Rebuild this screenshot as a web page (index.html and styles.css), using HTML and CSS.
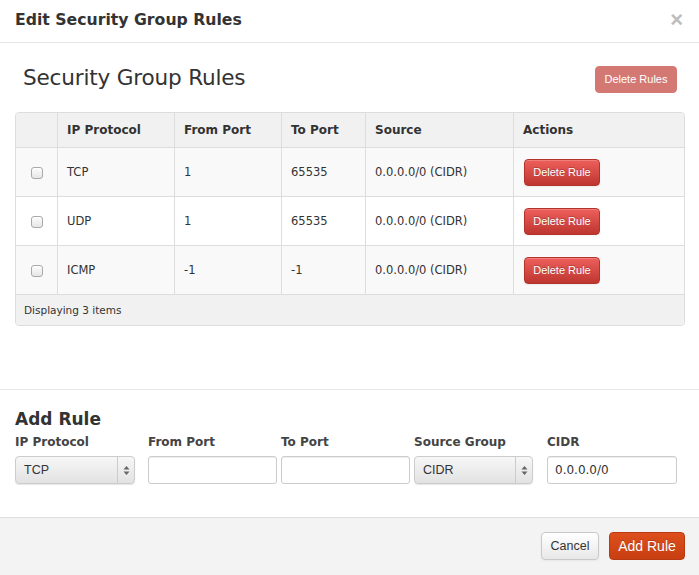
FILE: index.html
```html
<!DOCTYPE html>
<html>
<head>
<meta charset="utf-8">
<link rel="stylesheet" href="styles.css">
</head>
<body>
<div class="modal">
  <div class="modal-header">
    <h3 class="modal-title">Edit Security Group Rules</h3>
    <span class="close">×</span>
  </div>
  <div class="modal-body">
    <div class="table-head">
      <h2 class="table-title">Security Group Rules</h2>
      <button class="btn btn-danger btn-small disabled">Delete Rules</button>
    </div>
    <table class="rules">
      <thead>
        <tr>
          <th class="c-check"></th>
          <th class="c-proto">IP Protocol</th>
          <th class="c-from">From Port</th>
          <th class="c-to">To Port</th>
          <th class="c-src">Source</th>
          <th class="c-act">Actions</th>
        </tr>
      </thead>
      <tbody>
        <tr class="odd">
          <td class="c-check"><span class="checkbox"></span></td>
          <td>TCP</td><td>1</td><td>65535</td><td>0.0.0.0/0 (CIDR)</td>
          <td><button class="btn btn-danger btn-small">Delete Rule</button></td>
        </tr>
        <tr>
          <td class="c-check"><span class="checkbox"></span></td>
          <td>UDP</td><td>1</td><td>65535</td><td>0.0.0.0/0 (CIDR)</td>
          <td><button class="btn btn-danger btn-small">Delete Rule</button></td>
        </tr>
        <tr class="odd">
          <td class="c-check"><span class="checkbox"></span></td>
          <td>ICMP</td><td>-1</td><td>-1</td><td>0.0.0.0/0 (CIDR)</td>
          <td><button class="btn btn-danger btn-small">Delete Rule</button></td>
        </tr>
      </tbody>
      <tfoot>
        <tr><td colspan="6">Displaying 3 items</td></tr>
      </tfoot>
    </table>
  </div>
  <div class="add-rule">
    <h3 class="add-title">Add Rule</h3>
    <div class="fields">
      <div class="field f-proto">
        <label>IP Protocol</label>
        <div class="select"><span class="sel-text">TCP</span><span class="sel-arrows"><svg width="7" height="11" viewBox="0 0 7 11"><path d="M3.5 1 L6.5 4.5 H0.5 Z" fill="#666"/><path d="M3.5 10 L6.5 6.5 H0.5 Z" fill="#666"/></svg></span></div>
      </div>
      <div class="field f-from">
        <label>From Port</label>
        <div class="input"></div>
      </div>
      <div class="field f-to">
        <label>To Port</label>
        <div class="input"></div>
      </div>
      <div class="field f-src">
        <label>Source Group</label>
        <div class="select"><span class="sel-text">CIDR</span><span class="sel-arrows"><svg width="7" height="11" viewBox="0 0 7 11"><path d="M3.5 1 L6.5 4.5 H0.5 Z" fill="#666"/><path d="M3.5 10 L6.5 6.5 H0.5 Z" fill="#666"/></svg></span></div>
      </div>
      <div class="field f-cidr">
        <label>CIDR</label>
        <div class="input">0.0.0.0/0</div>
      </div>
    </div>
  </div>
  <div class="modal-footer">
    <button class="btn btn-default">Cancel</button>
    <button class="btn btn-primary">Add Rule</button>
  </div>
</div>
</body>
</html>
```
FILE: styles.css
```css
* { box-sizing: border-box; }
html, body { margin: 0; padding: 0; background: #fff; }
body { font-family: "DejaVu Sans", Verdana, sans-serif; color: #333; width: 699px; height: 575px; overflow: hidden; }

.modal { width: 699px; height: 575px; display: flex; flex-direction: column; }

.modal-header {
  height: 43px;
  border-bottom: 1px solid #e6e6e6;
  display: flex;
  align-items: center;
  justify-content: space-between;
  padding: 0 15px 3px 15px;
}
.modal-title { margin: 0; font-size: 15.7px; font-weight: bold; color: #333; }
.close { font-family: "Liberation Sans", Arial, sans-serif; font-size: 22px; font-weight: bold; color: #bdbdbd; line-height: 1; margin-right: 1px; }

.modal-body { padding: 0 14px 0 15px; height: 347px; border-bottom: 1px solid #e8e8e8; }
.table-head { display: flex; justify-content: space-between; align-items: flex-start; height: 69px; padding: 0 8px 0 8px; }
.table-title { margin: 22px 0 0 0; font-family: "DejaVu Sans", Verdana, sans-serif; font-weight: normal; font-size: 21.6px; line-height: 26px; color: #333; letter-spacing: -0.2px; }

.btn {
  font-family: "Liberation Sans", Arial, sans-serif;
  border-radius: 4px;
  cursor: pointer;
  line-height: 1;
}
.btn-small { font-size: 11px; height: 27px; padding: 0 10px; }
.btn-danger {
  color: #fff;
  border: 1px solid #b3322c;
  background: linear-gradient(#ee5f5b, #bd362f);
  text-shadow: 0 -1px 0 rgba(0,0,0,0.25);
  box-shadow: inset 0 1px 0 rgba(255,255,255,0.2), 0 1px 2px rgba(0,0,0,0.05);
}
.btn-danger.disabled { margin-top: 23px; background: #d47874; border-color: #d47874; box-shadow: none; text-shadow: none; width: 82px; padding: 0; }

table.rules {
  width: 670px;
  border-collapse: separate;
  border-spacing: 0;
  border: 1px solid #ddd;
  border-radius: 4px;
  font-size: 11.5px;
  table-layout: fixed;
}
.rules th, .rules td { text-align: left; border-left: 1px solid #ddd; border-top: 1px solid #ddd; vertical-align: middle; padding: 0 9px; }
.rules th:first-child, .rules td:first-child { border-left: 0; }
.rules thead th { border-top: 0; background: #f1f1f1; height: 34px; font-weight: bold; font-size: 12px; }
.rules thead th:first-child { border-top-left-radius: 4px; }
.rules thead th:last-child { border-top-right-radius: 4px; }
.rules tbody td { height: 49px; background: #fff; }
.rules tbody tr.odd td { background: #f9f9f9; }
.rules tfoot td { height: 31px; background: #f1f1f1; font-size: 10.5px; padding-left: 8px; border-radius: 0 0 4px 4px; }
.rules .c-check { width: 41px; text-align: center; padding: 0; }
.c-proto { width: 117px; }
.c-from { width: 107px; }
.c-to { width: 84px; }
.c-src { width: 148px; }
.c-act { width: 171px; }
.rules td .btn-small { width: 76px; padding: 0; margin-left: 1px; }
.checkbox {
  display: inline-block; width: 12px; height: 12px;
  border: 1px solid #a9a9a9; border-radius: 3px;
  background: linear-gradient(#fcfcfc, #e6e6e6);
  vertical-align: middle;
  box-shadow: inset 0 1px 0 #fff;
}

.add-rule { padding: 18px 15px 0 15px; height: 128px; border-bottom: 1px solid #ddd; }
.add-title { margin: 0 0 4px 0; font-size: 17px; font-weight: bold; color: #333; line-height: 22px; }
.fields { display: grid; grid-template-columns: repeat(5, 133px); }
.field { display: flex; flex-direction: column; }
.f-proto .select { width: 120px; }
.f-from .input, .f-to .input { width: 129px; }
.f-src .select { width: 119px; }
.f-cidr .input { width: 130px; }
.field label { font-size: 12px; font-weight: bold; color: #444; height: 16px; line-height: 16px; margin-bottom: 6px; }
.input {
  height: 28px; border: 1px solid #ccc; border-radius: 3px;
  font-size: 12px; padding: 0 7px; line-height: 26px; color: #333;
  box-shadow: inset 0 1px 1px rgba(0,0,0,0.075);
  background: #fff;
}
.select {
  height: 28px; border: 1px solid #ccc; border-radius: 4px;
  display: flex; align-items: stretch;
  background: linear-gradient(#f7f7f7, #e2e2e2);
  font-family: "Liberation Sans", Arial, sans-serif;
  font-size: 12.5px; color: #333;
  box-shadow: 0 1px 1px rgba(0,0,0,0.1);
}
.sel-text { flex: 1; padding-left: 8px; line-height: 26px; }
.sel-arrows { width: 17px; border-left: 1px solid #ccc; display: flex; align-items: center; justify-content: center; }

.modal-footer {
  flex: 1;
  background: #f3f3f3;
  display: flex; justify-content: flex-end; align-items: flex-start;
  gap: 10px;
  padding: 14px 14px 0 0;
}
.btn-default {
  height: 28px; width: 58px; padding: 0; font-size: 12.5px; color: #333;
  border: 1px solid #c8c8c8;
  background: linear-gradient(#ffffff, #e8e8e8);
  box-shadow: inset 0 1px 0 rgba(255,255,255,0.2), 0 1px 2px rgba(0,0,0,0.05);
}
.btn-primary {
  height: 28px; width: 76px; padding: 0; font-size: 14px; color: #fff;
  border: 1px solid #b83a12;
  background: linear-gradient(#dd4f1c, #c83f12);
  text-shadow: 0 -1px 0 rgba(0,0,0,0.2);
}
```
